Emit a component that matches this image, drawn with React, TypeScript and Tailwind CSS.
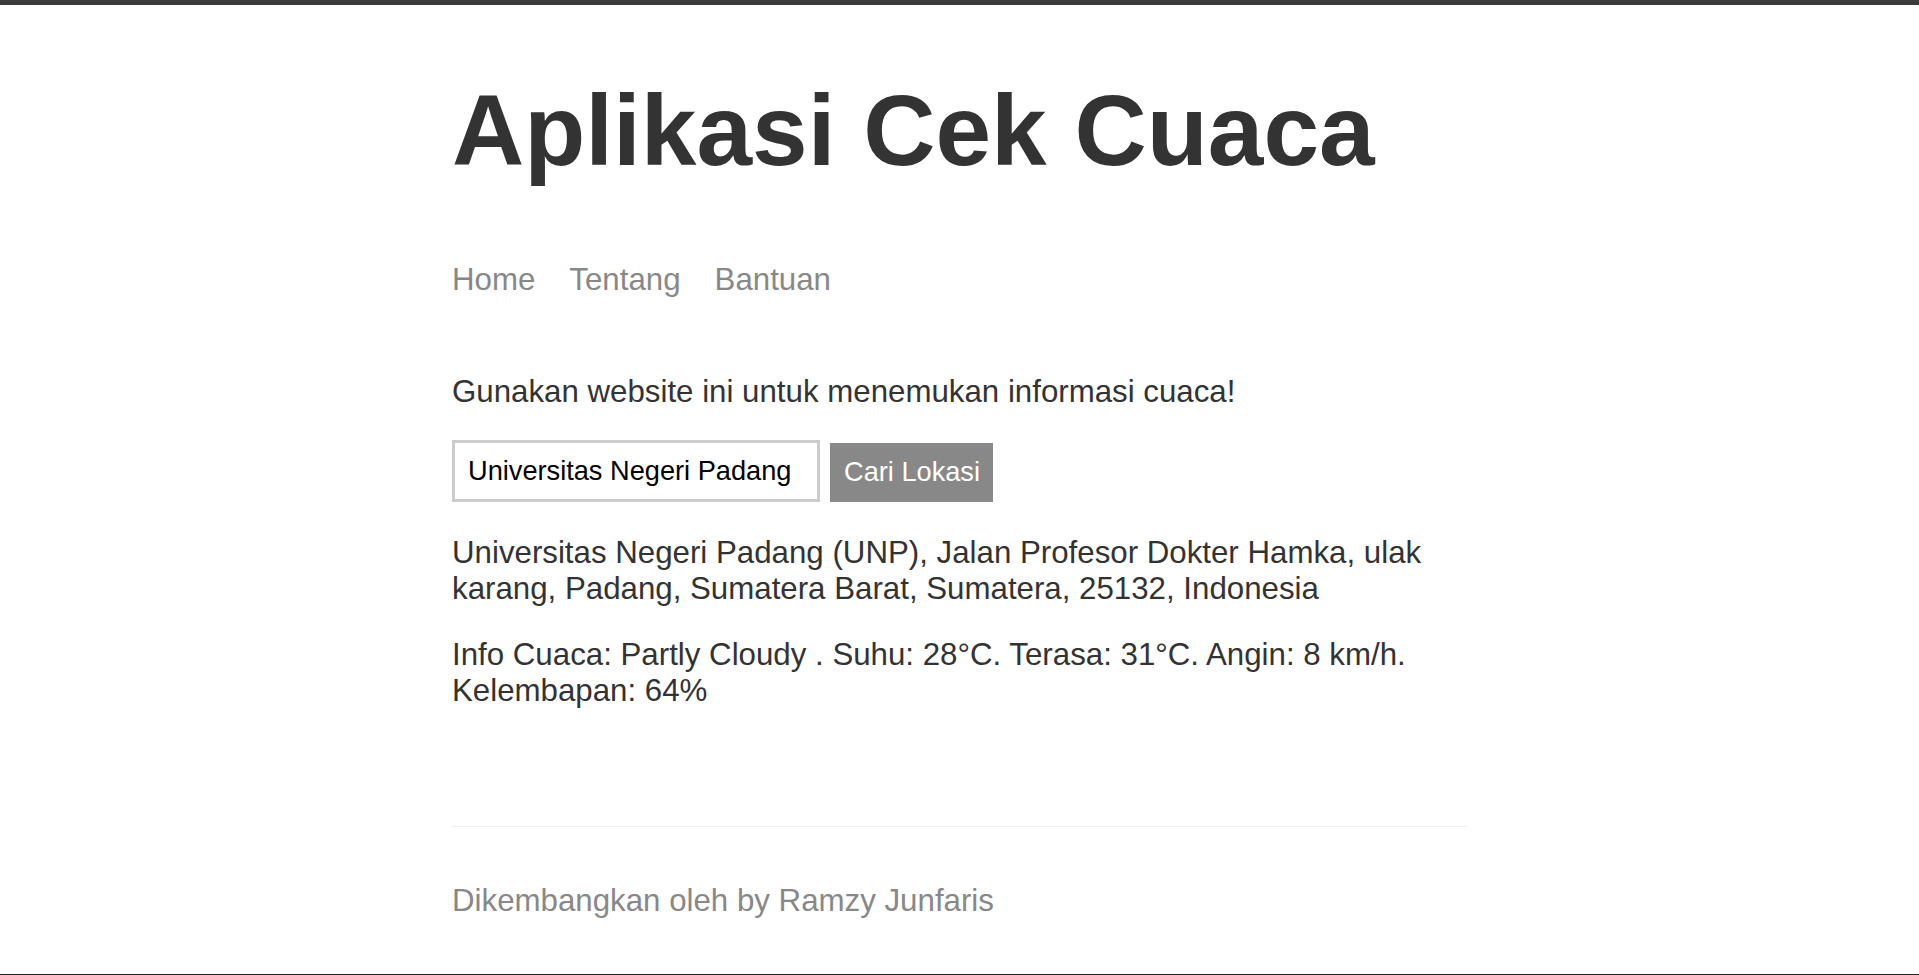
import React from "react";

export default function App() {
  return (
    <div
      className="h-[975px] flex flex-col bg-white text-[#333] overflow-hidden"
      style={{ fontFamily: '"Liberation Sans", Arial, sans-serif' }}
    >
      <div className="h-[5px] bg-[#3b3b3b] shrink-0" />
      <div className="flex-1">
        <div className="w-[1015px] mx-auto">
          <h1 className="mt-[69px] text-[100px] leading-[112px] font-bold">Aplikasi Cek Cuaca</h1>
          <nav className="mt-[76px] flex gap-[34px] text-[31.25px] leading-[36px] text-[#888]">
            <a href="#">Home</a>
            <a href="#">Tentang</a>
            <a href="#">Bantuan</a>
          </nav>
          <p className="mt-[76px] text-[31.25px] leading-[36px]">
            Gunakan website ini untuk menemukan informasi cuaca!
          </p>
          <form className="mt-[30px] flex items-end gap-[10px]" onSubmit={(e) => e.preventDefault()}>
            <input
              className="w-[368px] h-[62px] border-[3px] border-[#ccc] px-[13px] text-[27.2px] text-black outline-none"
              style={{ fontFamily: '"Liberation Sans", Arial, sans-serif' }}
              defaultValue="Universitas Negeri Padang"
            />
            <button
              className="w-[163px] h-[59px] bg-[#888] text-white text-[27.2px] pl-[14px] pr-0 text-left whitespace-nowrap"
              style={{ fontFamily: '"Liberation Sans", Arial, sans-serif' }}
            >
              Cari Lokasi
            </button>
          </form>
          <p className="mt-[33px] text-[31.25px] leading-[36px]">
            Universitas Negeri Padang (UNP), Jalan Profesor Dokter Hamka, ulak karang, Padang, Sumatera Barat, Sumatera, 25132, Indonesia
          </p>
          <p className="mt-[30px] text-[31.25px] leading-[36px]">
            Info Cuaca: Partly Cloudy . Suhu: 28°C. Terasa: 31°C. Angin: 8 km/h. Kelembapan: 64%
          </p>
          <div className="mt-[117px] border-t border-[#eee]" />
          <p className="mt-[56px] text-[31.25px] leading-[36px] text-[#888]">
            Dikembangkan oleh by Ramzy Junfaris
          </p>
        </div>
      </div>
      <div className="h-[1px] bg-[#231f20] shrink-0" />
    </div>
  );
}
